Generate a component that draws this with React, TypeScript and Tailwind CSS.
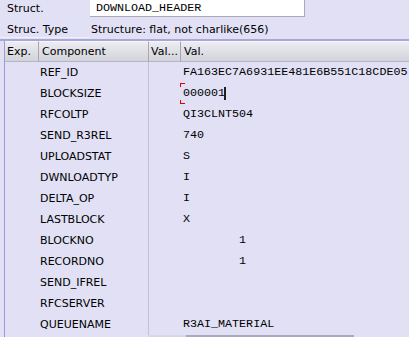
import React from "react";

type Row = { name: string; value: string };

const rows: Row[] = [
  { name: "REF_ID", value: "FA163EC7A6931EE481E6B551C18CDE05" },
  { name: "BLOCKSIZE", value: "000001" },
  { name: "RFCOLTP", value: "QI3CLNT504" },
  { name: "SEND_R3REL", value: "740" },
  { name: "UPLOADSTAT", value: "S" },
  { name: "DWNLOADTYP", value: "I" },
  { name: "DELTA_OP", value: "I" },
  { name: "LASTBLOCK", value: "X" },
  { name: "BLOCKNO", value: "        1" },
  { name: "RECORDNO", value: "        1" },
  { name: "SEND_IFREL", value: "" },
  { name: "RFCSERVER", value: "" },
  { name: "QUEUENAME", value: "R3AI_MATERIAL" },
];

const sans = "font-['DejaVu_Sans',sans-serif] text-[11px]";
const mono = "font-['Liberation_Mono',monospace] text-[11.7px]";

export default function App() {
  return (
    <div className={`w-[409px] h-[337px] overflow-hidden bg-[#e1e0f5] text-black ${sans}`}>
      {/* Header fields */}
      <div className="flex h-[20px]">
        <div className="w-[90px] pl-[7px] pt-[1px] leading-[16px]">Struct.</div>
        <div className={`w-[215px] h-[17px] bg-white border-r border-b border-[#a9a9b8] pl-[6px] leading-[16px] ${mono}`}>
          DOWNLOAD_HEADER
        </div>
      </div>
      <div className="flex h-[18px] items-center">
        <div className="w-[90px] pl-[7px] h-full leading-[20px] border-b border-[#f0f0fa]">Struc. Type</div>
        <div className="pl-[1px] leading-[20px] h-full">Structure: flat, not charlike(656)</div>
      </div>
      <div className="h-[2px] mt-[1px] bg-[#a8a7d9]" />

      {/* Table */}
      <div className="ml-[4px] border-l border-[#9c9bd0] h-[300px]">
        <div className="grid grid-cols-[34px_110px_32px_1fr] h-[21px] bg-gradient-to-b from-[#ededf2] to-[#d3d3db] border-b border-[#b4b4c4]">
          <div className="pl-[2px] leading-[20px] border-r border-[#a6a6b6] border-t border-t-[#f6f6fa]">Exp.</div>
          <div className="pl-[3px] leading-[20px] border-r border-[#a6a6b6] border-t border-t-[#f6f6fa]">Component</div>
          <div className="pl-[2px] leading-[20px] border-r border-[#a6a6b6] border-t border-t-[#f6f6fa] overflow-hidden whitespace-nowrap">Val...</div>
          <div className="pl-[3px] leading-[20px] border-t border-t-[#f6f6fa]">Val.</div>
        </div>
        {rows.map((r, i) => (
          <div key={r.name} className="grid grid-cols-[34px_109px_1fr] h-[21px]">
            <div />
            <div className="pl-[1px] leading-[21px] whitespace-nowrap">{r.name}</div>
            <div className="border-l border-[#c3c2d4] pl-[34px] relative">
              <span className={`leading-[21px] whitespace-pre ${mono}`}>{r.value}</span>
              {i === 1 && (
                <>
                  <span className="absolute left-[31px] top-[0px] w-[5px] h-[4px] border-l border-t border-[#e00000]" />
                  <span className="absolute left-[31px] top-[17px] w-[5px] h-[4px] border-l border-b border-[#e00000]" />
                  <span className="absolute left-[75px] top-[4px] w-[2px] h-[13px] bg-[#202020]" />
                </>
              )}
            </div>
          </div>
        ))}
        <div className="flex h-[4px]">
          <div className="w-[143px]" />
          <div className="w-[38px] bg-[#d6d6e4]" />
          <div className="w-[168px] border-t-2 border-[#a9a9bb]" />
        </div>
      </div>
    </div>
  );
}
